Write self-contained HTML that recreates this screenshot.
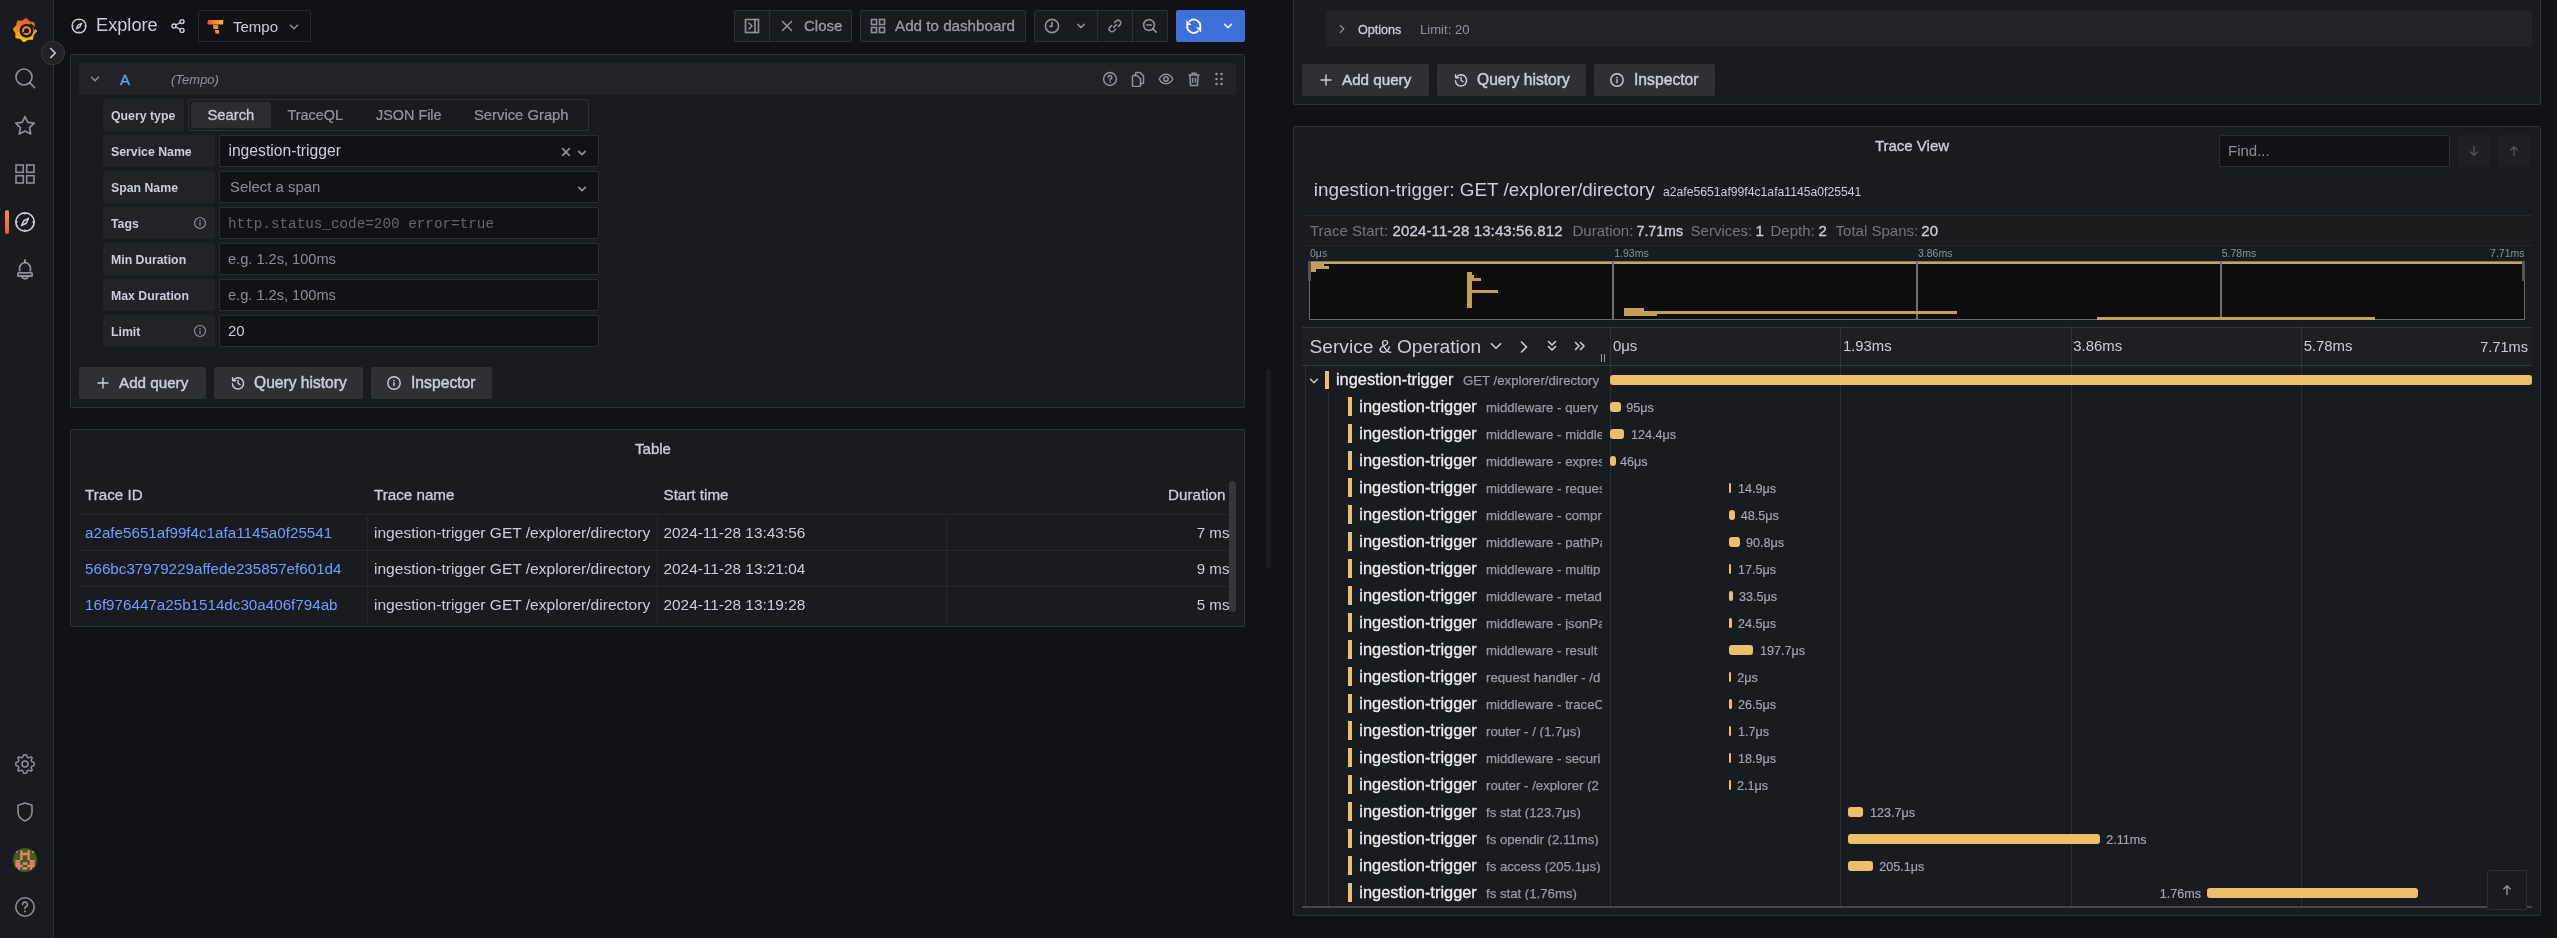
<!DOCTYPE html><html><head><meta charset="utf-8"><title>Explore - Tempo</title><style>html,body{margin:0;padding:0;}body{-webkit-font-smoothing:antialiased;width:2557px;height:938px;overflow:hidden;position:relative;background:#111217;font-family:"Liberation Sans",sans-serif;}</style></head><body><div style="position:absolute;left:0;top:0;width:2557px;height:938px;will-change:transform;">
<div style="position:absolute;left:0px;top:0px;width:53px;height:938px;background:#181b1f;border-right:1px solid rgba(204,204,220,0.12);"></div>
<svg style="position:absolute;left:13px;top:18px;" width="24" height="24" viewBox="0 0 24 24" fill="none"><defs><linearGradient id="glg" x1="0" y1="0" x2="0" y2="1"><stop offset="0" stop-color="#f05a28"/><stop offset="1" stop-color="#fbca0a"/></linearGradient></defs>
<path fill="url(#glg)" stroke="url(#glg)" stroke-width="2.2" stroke-linejoin="round" d="M13.10 1.25 L16.21 4.36 L20.52 5.24 L20.52 9.63 L22.95 13.30 L19.84 16.41 L18.96 20.72 L14.57 20.72 L10.90 23.15 L7.79 20.04 L3.48 19.16 L3.48 14.77 L1.05 11.10 L4.16 7.99 L5.04 3.68 L9.43 3.68 Z"/>
<circle cx="13.5" cy="12.7" r="7.0" fill="#181b1f"/>
<path d="M16.8 6.0 Q20.6 7.6 22.2 11.6" stroke="#181b1f" stroke-width="1.6" fill="none"/>
<circle cx="13.5" cy="12.7" r="3.5" stroke="#f98a2a" stroke-width="1.9" fill="none"/>
<path d="M10.2 15.0 L12.4 13.4" stroke="#181b1f" stroke-width="1.4"/></svg>
<div style="position:absolute;left:41px;top:41px;width:24px;height:24px;background:#212328;border:1px solid rgba(204,204,220,0.12);border-radius:50%;box-sizing:border-box;"></div>
<svg style="position:absolute;left:45px;top:45px;" width="16" height="16" viewBox="0 0 16 16" fill="none"><path d="M5.75 3.5 L10.25 8 L5.75 12.5" stroke="#ccccdc" stroke-width="1.6" stroke-linecap="round" stroke-linejoin="round"/></svg>
<svg style="position:absolute;left:13px;top:66px;" width="24" height="24" viewBox="0 0 24 24" fill="none"><circle cx="11" cy="11" r="8" stroke="rgba(204,204,220,0.65)" stroke-width="1.7"/><path d="M16.9 16.9 L21.6 21.6" stroke="rgba(204,204,220,0.65)" stroke-width="1.6" stroke-linecap="round"/></svg>
<svg style="position:absolute;left:13px;top:114px;" width="24" height="24" viewBox="0 0 24 24" fill="none"><g transform="translate(12 11.8) scale(1.08) translate(-12 -11.8)"><path d="M12 3.2 L14.6 8.6 L20.5 9.4 L16.2 13.5 L17.3 19.4 L12 16.6 L6.7 19.4 L7.8 13.5 L3.5 9.4 L9.4 8.6 Z" stroke="rgba(204,204,220,0.65)" stroke-width="1.6" stroke-linejoin="round"/></g></svg>
<svg style="position:absolute;left:13px;top:162px;" width="24" height="24" viewBox="0 0 24 24" fill="none"><rect x="3" y="3" width="7.3" height="7.3" stroke="rgba(204,204,220,0.65)" stroke-width="1.6"/><rect x="13.7" y="3" width="7.3" height="7.3" stroke="rgba(204,204,220,0.65)" stroke-width="1.6"/><rect x="3" y="13.7" width="7.3" height="7.3" stroke="rgba(204,204,220,0.65)" stroke-width="1.6"/><rect x="13.7" y="13.7" width="7.3" height="7.3" stroke="rgba(204,204,220,0.65)" stroke-width="1.6"/></svg>
<div style="position:absolute;left:5px;top:210px;width:4px;height:24px;background:linear-gradient(180deg,#ff8833,#f55f3e);border-radius:2px;"></div>
<svg style="position:absolute;left:13px;top:210px;" width="24" height="24" viewBox="0 0 24 24" fill="none"><g transform="scale(1.0)"><circle cx="12" cy="12" r="9.2" stroke="#ccccdc" stroke-width="1.7"/><path d="M15.5 8.5 L13.2 13.2 L8.5 15.5 L10.8 10.8 Z" stroke="#ccccdc" stroke-width="1.53" stroke-linejoin="round"/><path d="M12 2.8 V4.6 M12 19.4 V21.2 M2.8 12 H4.6 M19.4 12 H21.2" stroke="#ccccdc" stroke-width="1.53"/></g></svg>
<svg style="position:absolute;left:13px;top:258px;" width="24" height="24" viewBox="0 0 24 24" fill="none"><path d="M12 2 V4.2" stroke="rgba(204,204,220,0.65)" stroke-width="1.9" stroke-linecap="round"/><path d="M6.6 13.6 V10.1 A5.4 5.4 0 0 1 17.4 10.1 V13.6" stroke="rgba(204,204,220,0.65)" stroke-width="1.8"/><rect x="4.9" y="14.9" width="14.2" height="3.1" rx="0.6" stroke="rgba(204,204,220,0.65)" stroke-width="1.8"/><path d="M9 18.8 A3.1 2.6 0 0 0 15 18.8" stroke="rgba(204,204,220,0.65)" stroke-width="1.8"/></svg>
<svg style="position:absolute;left:13px;top:752px;" width="24" height="24" viewBox="0 0 24 24" fill="none"><circle cx="12" cy="12" r="3" stroke="rgba(204,204,220,0.65)" stroke-width="1.6"/><path d="M12 2.8 L13.6 3 L14.2 5.2 L15.9 5.9 L17.9 4.8 L19.2 6.1 L18.1 8.1 L18.8 9.8 L21 10.4 L21.2 12 L21 13.6 L18.8 14.2 L18.1 15.9 L19.2 17.9 L17.9 19.2 L15.9 18.1 L14.2 18.8 L13.6 21 L12 21.2 L10.4 21 L9.8 18.8 L8.1 18.1 L6.1 19.2 L4.8 17.9 L5.9 15.9 L5.2 14.2 L3 13.6 L2.8 12 L3 10.4 L5.2 9.8 L5.9 8.1 L4.8 6.1 L6.1 4.8 L8.1 5.9 L9.8 5.2 L10.4 3 Z" stroke="rgba(204,204,220,0.65)" stroke-width="1.5" stroke-linejoin="round"/></svg>
<svg style="position:absolute;left:13px;top:800px;" width="24" height="24" viewBox="0 0 24 24" fill="none"><path d="M12 3 L19 5.2 V12 C19 16.5 15.5 19.5 12 21 C8.5 19.5 5 16.5 5 12 V5.2 Z" stroke="rgba(204,204,220,0.65)" stroke-width="1.6" stroke-linejoin="round"/></svg>
<svg style="position:absolute;left:13px;top:848px;" width="24" height="24" viewBox="0 0 24 24" fill="none"><defs><clipPath id="avc"><circle cx="12" cy="12" r="12"/></clipPath></defs><g clip-path="url(#avc)"><rect width="24" height="24" fill="#3f5f17"/><rect x="2.40" y="2.40" width="2.45" height="2.45" fill="#f27f7a"/><rect x="7.20" y="2.40" width="2.45" height="2.45" fill="#f27f7a"/><rect x="14.40" y="2.40" width="2.45" height="2.45" fill="#f27f7a"/><rect x="19.20" y="2.40" width="2.45" height="2.45" fill="#f27f7a"/><rect x="7.20" y="4.80" width="2.45" height="2.45" fill="#f27f7a"/><rect x="9.60" y="4.80" width="2.45" height="2.45" fill="#f27f7a"/><rect x="12.00" y="4.80" width="2.45" height="2.45" fill="#f27f7a"/><rect x="14.40" y="4.80" width="2.45" height="2.45" fill="#f27f7a"/><rect x="7.20" y="7.20" width="2.45" height="2.45" fill="#f27f7a"/><rect x="14.40" y="7.20" width="2.45" height="2.45" fill="#f27f7a"/><rect x="7.20" y="9.60" width="2.45" height="2.45" fill="#f27f7a"/><rect x="14.40" y="9.60" width="2.45" height="2.45" fill="#f27f7a"/><rect x="2.40" y="12.00" width="2.45" height="2.45" fill="#f27f7a"/><rect x="4.80" y="12.00" width="2.45" height="2.45" fill="#f27f7a"/><rect x="16.80" y="12.00" width="2.45" height="2.45" fill="#f27f7a"/><rect x="19.20" y="12.00" width="2.45" height="2.45" fill="#f27f7a"/><rect x="2.40" y="14.40" width="2.45" height="2.45" fill="#f27f7a"/><rect x="4.80" y="14.40" width="2.45" height="2.45" fill="#f27f7a"/><rect x="9.60" y="14.40" width="2.45" height="2.45" fill="#f27f7a"/><rect x="12.00" y="14.40" width="2.45" height="2.45" fill="#f27f7a"/><rect x="16.80" y="14.40" width="2.45" height="2.45" fill="#f27f7a"/><rect x="19.20" y="14.40" width="2.45" height="2.45" fill="#f27f7a"/><rect x="2.40" y="16.80" width="2.45" height="2.45" fill="#f27f7a"/><rect x="4.80" y="16.80" width="2.45" height="2.45" fill="#f27f7a"/><rect x="7.20" y="16.80" width="2.45" height="2.45" fill="#f27f7a"/><rect x="14.40" y="16.80" width="2.45" height="2.45" fill="#f27f7a"/><rect x="16.80" y="16.80" width="2.45" height="2.45" fill="#f27f7a"/><rect x="19.20" y="16.80" width="2.45" height="2.45" fill="#f27f7a"/><rect x="4.80" y="19.20" width="2.45" height="2.45" fill="#f27f7a"/><rect x="9.60" y="19.20" width="2.45" height="2.45" fill="#f27f7a"/><rect x="12.00" y="19.20" width="2.45" height="2.45" fill="#f27f7a"/><rect x="16.80" y="19.20" width="2.45" height="2.45" fill="#f27f7a"/></g></svg>
<svg style="position:absolute;left:13px;top:895px;" width="24" height="24" viewBox="0 0 24 24" fill="none"><circle cx="12" cy="12" r="9.2" stroke="rgba(204,204,220,0.65)" stroke-width="1.6"/><path d="M9.6 9.6 A2.4 2.4 0 1 1 12.8 11.8 C12.2 12.1 12 12.5 12 13.2 V13.6" stroke="rgba(204,204,220,0.65)" stroke-width="1.6" stroke-linecap="round"/><circle cx="12" cy="16.5" r="1" fill="rgba(204,204,220,0.65)"/></svg>
<svg style="position:absolute;left:70px;top:17px;" width="18" height="18" viewBox="0 0 18 18" fill="none"><g transform="scale(0.75)"><circle cx="12" cy="12" r="9.2" stroke="#ccccdc" stroke-width="1.9"/><path d="M15.5 8.5 L13.2 13.2 L8.5 15.5 L10.8 10.8 Z" stroke="#ccccdc" stroke-width="1.71" stroke-linejoin="round"/><path d="M12 2.8 V4.6 M12 19.4 V21.2 M2.8 12 H4.6 M19.4 12 H21.2" stroke="#ccccdc" stroke-width="1.71"/></g></svg>
<div style="position:absolute;top:15.99px;font-size:18.2px;line-height:18.2px;font-weight:400;color:#ccccdc;white-space:nowrap;left:96px;">Explore</div>
<svg style="position:absolute;left:170px;top:18px;" width="16" height="16" viewBox="0 0 16 16" fill="none"><circle cx="12" cy="3.6" r="2" stroke="#ccccdc" stroke-width="1.4"/><circle cx="12" cy="12.4" r="2" stroke="#ccccdc" stroke-width="1.4"/><circle cx="4" cy="8" r="2" stroke="#ccccdc" stroke-width="1.4"/><path d="M5.8 7 L10.2 4.6 M5.8 9 L10.2 11.4" stroke="#ccccdc" stroke-width="1.4"/></svg>
<div style="position:absolute;left:198px;top:10px;width:113px;height:32px;border:1px solid rgba(204,204,220,0.12);border-radius:2px;box-sizing:border-box;background:#111217;"></div>
<svg style="position:absolute;left:207px;top:19px;" width="17" height="16" viewBox="0 0 17 16" fill="none"><defs><linearGradient id="tg" x1="0" y1="0" x2="1" y2="0"><stop offset="0" stop-color="#f4502a"/><stop offset="1" stop-color="#fbbd26"/></linearGradient></defs><path d="M1.2 1.1 H16.1 V5.5 H1 L0.2 5 Z" fill="url(#tg)"/><path d="M6.1 5.8 H11.2 V9.9 H7 L6.1 9 Z" fill="#f7892b"/><path d="M7.9 10.9 H12.1 V14.8 H8.6 Z" fill="#f6822b"/></svg>
<div style="position:absolute;top:18.70px;font-size:15px;line-height:15px;font-weight:400;color:#ccccdc;white-space:nowrap;left:233px;">Tempo</div>
<svg style="position:absolute;left:286px;top:18.5px;" width="16" height="16" viewBox="0 0 16 16" fill="none"><path d="M4.5 6.25 L8 9.75 L11.5 6.25" stroke="rgba(204,204,220,0.65)" stroke-width="1.5" stroke-linecap="round" stroke-linejoin="round"/></svg>
<div style="position:absolute;left:734px;top:10px;width:118px;height:32px;border:1px solid rgba(204,204,220,0.12);border-radius:2px;box-sizing:border-box;background:#181b1f;"></div>
<div style="position:absolute;left:769px;top:10px;width:1px;height:32px;background:rgba(204,204,220,0.12);"></div>
<svg style="position:absolute;left:744px;top:18px;" width="16" height="16" viewBox="0 0 16 16" fill="none"><rect x="1.5" y="1.5" width="13" height="13" stroke="rgba(204,204,220,0.65)" stroke-width="1.65"/><path d="M11 1.5 V14.5" stroke="rgba(204,204,220,0.65)" stroke-width="1.65"/><path d="M5 5 L8 8 L5 11" stroke="rgba(204,204,220,0.65)" stroke-width="1.65" stroke-linecap="round" stroke-linejoin="round"/></svg>
<svg style="position:absolute;left:779px;top:18px;" width="16" height="16" viewBox="0 0 16 16" fill="none"><path d="M3.5 3.5 L12.5 12.5 M12.5 3.5 L3.5 12.5" stroke="rgba(204,204,220,0.65)" stroke-width="1.65" stroke-linecap="round"/></svg>
<div style="position:absolute;top:18.30px;font-size:15px;line-height:15px;font-weight:400;color:rgba(204,204,220,0.65);white-space:nowrap;-webkit-text-stroke:0.3px rgba(204,204,220,0.65);left:804px;">Close</div>
<div style="position:absolute;left:860px;top:10px;width:166px;height:32px;border:1px solid rgba(204,204,220,0.12);border-radius:2px;box-sizing:border-box;background:#181b1f;"></div>
<svg style="position:absolute;left:870px;top:18px;" width="16" height="16" viewBox="0 0 16 16" fill="none"><rect x="1.5" y="1.5" width="5" height="5" stroke="rgba(204,204,220,0.65)" stroke-width="1.65"/><rect x="9.5" y="1.5" width="5" height="5" stroke="rgba(204,204,220,0.65)" stroke-width="1.65"/><rect x="1.5" y="9.5" width="5" height="5" stroke="rgba(204,204,220,0.65)" stroke-width="1.65"/><rect x="9.5" y="9.5" width="5" height="5" stroke="rgba(204,204,220,0.65)" stroke-width="1.65"/></svg>
<div style="position:absolute;top:18.13px;font-size:15.2px;line-height:15.2px;font-weight:400;color:rgba(204,204,220,0.65);white-space:nowrap;-webkit-text-stroke:0.3px rgba(204,204,220,0.65);left:895px;">Add to dashboard</div>
<div style="position:absolute;left:1034px;top:10px;width:134px;height:32px;border:1px solid rgba(204,204,220,0.12);border-radius:2px;box-sizing:border-box;background:#181b1f;"></div>
<div style="position:absolute;left:1097px;top:10px;width:1px;height:32px;background:rgba(204,204,220,0.12);"></div>
<div style="position:absolute;left:1132px;top:10px;width:1px;height:32px;background:rgba(204,204,220,0.12);"></div>
<svg style="position:absolute;left:1044px;top:18px;" width="16" height="16" viewBox="0 0 16 16" fill="none"><circle cx="8" cy="8" r="6.6" stroke="rgba(204,204,220,0.65)" stroke-width="1.65"/><path d="M8 4.3 V8.4 H5.9" stroke="rgba(204,204,220,0.65)" stroke-width="1.65" stroke-linecap="round" stroke-linejoin="round"/></svg>
<svg style="position:absolute;left:1072.5px;top:18px;" width="16" height="16" viewBox="0 0 16 16" fill="none"><path d="M4.8 6.4 L8 9.6 L11.2 6.4" stroke="rgba(204,204,220,0.65)" stroke-width="1.5" stroke-linecap="round" stroke-linejoin="round"/></svg>
<svg style="position:absolute;left:1107px;top:18px;" width="16" height="16" viewBox="0 0 16 16" fill="none"><path d="M6.8 9.2 L9.2 6.8" stroke="rgba(204,204,220,0.65)" stroke-width="1.65" stroke-linecap="round"/><path d="M7.6 4.6 L9.2 3 A2.6 2.6 0 0 1 13 6.8 L11.4 8.4" stroke="rgba(204,204,220,0.65)" stroke-width="1.65" stroke-linecap="round"/><path d="M8.4 11.4 L6.8 13 A2.6 2.6 0 0 1 3 9.2 L4.6 7.6" stroke="rgba(204,204,220,0.65)" stroke-width="1.65" stroke-linecap="round"/></svg>
<svg style="position:absolute;left:1142px;top:18px;" width="16" height="16" viewBox="0 0 16 16" fill="none"><circle cx="7" cy="7" r="5.4" stroke="rgba(204,204,220,0.65)" stroke-width="1.65"/><path d="M4.6 7 H9.4 M11 11 L14.2 14.2" stroke="rgba(204,204,220,0.65)" stroke-width="1.65" stroke-linecap="round"/></svg>
<div style="position:absolute;left:1176px;top:10px;width:69px;height:32px;background:#3d71d9;border-radius:2px;"></div>
<svg style="position:absolute;left:1185px;top:18px;" width="17" height="17" viewBox="0 0 17 17" fill="none"><path d="M4.08 3.58 A6.6 6.6 0 0 1 15.12 9.96" stroke="#fff" stroke-width="1.7"/><path d="M13.42 12.92 A6.6 6.6 0 0 1 2.38 6.54" stroke="#fff" stroke-width="1.7"/><path d="M1.4 1.9 L1.4 6.9 L6.4 6.9 Z" fill="#fff"/><path d="M16.1 14.6 L16.1 9.6 L11.1 9.6 Z" fill="#fff"/></svg>
<svg style="position:absolute;left:1220px;top:18px;" width="16" height="16" viewBox="0 0 16 16" fill="none"><path d="M4.6 6.3 L8 9.7 L11.4 6.3" stroke="#fff" stroke-width="1.6" stroke-linecap="round" stroke-linejoin="round"/></svg>
<div style="position:absolute;left:70px;top:54px;width:1175px;height:354px;background:#181b1f;border:1px solid rgba(204,204,220,0.12);border-radius:2px;box-sizing:border-box;"></div>
<div style="position:absolute;left:79px;top:63px;width:1157px;height:32px;background:#212328;border-radius:2px;"></div>
<svg style="position:absolute;left:87px;top:71px;" width="16" height="16" viewBox="0 0 16 16" fill="none"><path d="M4.4 6.2 L8 9.8 L11.6 6.2" stroke="rgba(204,204,220,0.65)" stroke-width="1.4" stroke-linecap="round" stroke-linejoin="round"/></svg>
<div style="position:absolute;top:71.50px;font-size:15px;line-height:15px;font-weight:400;color:#6e9fff;white-space:nowrap;-webkit-text-stroke:0.3px #6e9fff;left:120px;">A</div>
<div style="position:absolute;top:73.00px;font-size:13px;line-height:13px;font-weight:400;color:rgba(204,204,220,0.65);white-space:nowrap;font-style:italic;left:171px;">(Tempo)</div>
<svg style="position:absolute;left:1102px;top:71px;" width="16" height="16" viewBox="0 0 16 16" fill="none"><circle cx="8" cy="8" r="6.4" stroke="rgba(204,204,220,0.65)" stroke-width="1.5"/><path d="M6.2 6.4 A1.8 1.8 0 1 1 8.6 8 C8.2 8.3 8 8.6 8 9.2" stroke="rgba(204,204,220,0.65)" stroke-width="1.5" stroke-linecap="round"/><circle cx="8" cy="11.2" r="0.8" fill="rgba(204,204,220,0.65)"/></svg>
<svg style="position:absolute;left:1130px;top:71px;" width="16" height="16" viewBox="0 0 16 16" fill="none"><path d="M5.5 4.5 V2.5 A1 1 0 0 1 6.5 1.5 H10 L13.5 5 V11.5 A1 1 0 0 1 12.5 12.5 H10.5" stroke="rgba(204,204,220,0.65)" stroke-width="1.5" stroke-linejoin="round"/><path d="M2.5 5.5 A1 1 0 0 1 3.5 4.5 H7 L10.5 8 V14.5 A1 1 0 0 1 9.5 15.5 H3.5 A1 1 0 0 1 2.5 14.5 Z" stroke="rgba(204,204,220,0.65)" stroke-width="1.5" stroke-linejoin="round"/></svg>
<svg style="position:absolute;left:1158px;top:71px;" width="16" height="16" viewBox="0 0 16 16" fill="none"><path d="M1.2 8 C3 4.6 5.4 3.2 8 3.2 C10.6 3.2 13 4.6 14.8 8 C13 11.4 10.6 12.8 8 12.8 C5.4 12.8 3 11.4 1.2 8 Z" stroke="rgba(204,204,220,0.65)" stroke-width="1.5" stroke-linejoin="round"/><circle cx="8" cy="8" r="2.2" stroke="rgba(204,204,220,0.65)" stroke-width="1.5"/></svg>
<svg style="position:absolute;left:1186px;top:71px;" width="16" height="16" viewBox="0 0 16 16" fill="none"><path d="M2.5 4 H13.5 M6 4 V2.2 H10 V4 M3.8 4 L4.5 14.5 H11.5 L12.2 4 M6.6 6.8 V11.8 M9.4 6.8 V11.8" stroke="rgba(204,204,220,0.65)" stroke-width="1.5" stroke-linejoin="round"/></svg>
<svg style="position:absolute;left:1211px;top:71px;" width="16" height="16" viewBox="0 0 16 16" fill="none"><circle cx="5.5" cy="3" r="1.3" fill="rgba(204,204,220,0.65)"/><circle cx="5.5" cy="8" r="1.3" fill="rgba(204,204,220,0.65)"/><circle cx="5.5" cy="13" r="1.3" fill="rgba(204,204,220,0.65)"/><circle cx="10.5" cy="3" r="1.3" fill="rgba(204,204,220,0.65)"/><circle cx="10.5" cy="8" r="1.3" fill="rgba(204,204,220,0.65)"/><circle cx="10.5" cy="13" r="1.3" fill="rgba(204,204,220,0.65)"/></svg>
<div style="position:absolute;left:103px;top:99px;width:81px;height:32px;background:#212328;border-radius:2px;"></div>
<div style="position:absolute;top:109.59px;font-size:12.3px;line-height:12.3px;font-weight:700;color:#ccccdc;white-space:nowrap;left:111px;">Query type</div>
<div style="position:absolute;left:103px;top:135px;width:112px;height:32px;background:#212328;border-radius:2px;"></div>
<div style="position:absolute;top:145.59px;font-size:12.3px;line-height:12.3px;font-weight:700;color:#ccccdc;white-space:nowrap;left:111px;">Service Name</div>
<div style="position:absolute;left:219px;top:135px;width:380px;height:32px;background:#111217;border:1px solid rgba(204,204,220,0.15);border-radius:2px;box-sizing:border-box;"></div>
<div style="position:absolute;left:103px;top:171px;width:112px;height:32px;background:#212328;border-radius:2px;"></div>
<div style="position:absolute;top:181.59px;font-size:12.3px;line-height:12.3px;font-weight:700;color:#ccccdc;white-space:nowrap;left:111px;">Span Name</div>
<div style="position:absolute;left:219px;top:171px;width:380px;height:32px;background:#111217;border:1px solid rgba(204,204,220,0.15);border-radius:2px;box-sizing:border-box;"></div>
<div style="position:absolute;left:103px;top:207px;width:112px;height:32px;background:#212328;border-radius:2px;"></div>
<div style="position:absolute;top:217.59px;font-size:12.3px;line-height:12.3px;font-weight:700;color:#ccccdc;white-space:nowrap;left:111px;">Tags</div>
<svg style="position:absolute;left:191.5px;top:215px;" width="16" height="16" viewBox="0 0 16 16" fill="none"><circle cx="8" cy="8" r="5.5" stroke="rgba(204,204,220,0.65)" stroke-width="1.2"/><path d="M8 7.6 V10.6" stroke="rgba(204,204,220,0.65)" stroke-width="1.14" stroke-linecap="round"/><circle cx="8" cy="5.6" r="0.8" fill="rgba(204,204,220,0.65)"/></svg>
<div style="position:absolute;left:219px;top:207px;width:380px;height:32px;background:#111217;border:1px solid rgba(204,204,220,0.15);border-radius:2px;box-sizing:border-box;"></div>
<div style="position:absolute;left:103px;top:243px;width:112px;height:32px;background:#212328;border-radius:2px;"></div>
<div style="position:absolute;top:253.59px;font-size:12.3px;line-height:12.3px;font-weight:700;color:#ccccdc;white-space:nowrap;left:111px;">Min Duration</div>
<div style="position:absolute;left:219px;top:243px;width:380px;height:32px;background:#111217;border:1px solid rgba(204,204,220,0.15);border-radius:2px;box-sizing:border-box;"></div>
<div style="position:absolute;left:103px;top:279px;width:112px;height:32px;background:#212328;border-radius:2px;"></div>
<div style="position:absolute;top:289.59px;font-size:12.3px;line-height:12.3px;font-weight:700;color:#ccccdc;white-space:nowrap;left:111px;">Max Duration</div>
<div style="position:absolute;left:219px;top:279px;width:380px;height:32px;background:#111217;border:1px solid rgba(204,204,220,0.15);border-radius:2px;box-sizing:border-box;"></div>
<div style="position:absolute;left:103px;top:315px;width:112px;height:32px;background:#212328;border-radius:2px;"></div>
<div style="position:absolute;top:325.59px;font-size:12.3px;line-height:12.3px;font-weight:700;color:#ccccdc;white-space:nowrap;left:111px;">Limit</div>
<svg style="position:absolute;left:191.5px;top:323px;" width="16" height="16" viewBox="0 0 16 16" fill="none"><circle cx="8" cy="8" r="5.5" stroke="rgba(204,204,220,0.65)" stroke-width="1.2"/><path d="M8 7.6 V10.6" stroke="rgba(204,204,220,0.65)" stroke-width="1.14" stroke-linecap="round"/><circle cx="8" cy="5.6" r="0.8" fill="rgba(204,204,220,0.65)"/></svg>
<div style="position:absolute;left:219px;top:315px;width:380px;height:32px;background:#111217;border:1px solid rgba(204,204,220,0.15);border-radius:2px;box-sizing:border-box;"></div>
<div style="position:absolute;left:188px;top:99px;width:401px;height:32px;border:1px solid rgba(204,204,220,0.12);border-radius:2px;box-sizing:border-box;"></div>
<div style="position:absolute;left:191px;top:102px;width:80px;height:26px;background:rgba(204,204,220,0.10);border-radius:2px;"></div>
<div style="position:absolute;top:107.67px;font-size:14.8px;line-height:14.8px;font-weight:400;color:#ccccdc;white-space:nowrap;-webkit-text-stroke:0.3px #ccccdc;left:207.4px;">Search</div>
<div style="position:absolute;top:108.01px;font-size:14.4px;line-height:14.4px;font-weight:400;color:rgba(204,204,220,0.65);white-space:nowrap;-webkit-text-stroke:0.2px rgba(204,204,220,0.65);left:287.5px;">TraceQL</div>
<div style="position:absolute;top:108.01px;font-size:14.4px;line-height:14.4px;font-weight:400;color:rgba(204,204,220,0.65);white-space:nowrap;-webkit-text-stroke:0.2px rgba(204,204,220,0.65);left:376px;">JSON File</div>
<div style="position:absolute;top:107.67px;font-size:14.8px;line-height:14.8px;font-weight:400;color:rgba(204,204,220,0.65);white-space:nowrap;-webkit-text-stroke:0.2px rgba(204,204,220,0.65);left:474px;">Service Graph</div>
<div style="position:absolute;top:142.81px;font-size:15.7px;line-height:15.7px;font-weight:400;color:#ccccdc;white-space:nowrap;left:228.4px;">ingestion-trigger</div>
<svg style="position:absolute;left:558px;top:144px;" width="16" height="16" viewBox="0 0 16 16" fill="none"><path d="M4.6 4.6 L11.4 11.4 M11.4 4.6 L4.6 11.4" stroke="rgba(204,204,220,0.65)" stroke-width="1.7" stroke-linecap="round"/></svg>
<svg style="position:absolute;left:574px;top:144.5px;" width="16" height="16" viewBox="0 0 16 16" fill="none"><path d="M4.7 6.35 L8 9.65 L11.3 6.35" stroke="rgba(204,204,220,0.65)" stroke-width="1.8" stroke-linecap="round" stroke-linejoin="round"/></svg>
<div style="position:absolute;top:180.39px;font-size:14.9px;line-height:14.9px;font-weight:400;color:rgba(204,204,220,0.65);white-space:nowrap;left:230px;">Select a span</div>
<svg style="position:absolute;left:574px;top:180.5px;" width="16" height="16" viewBox="0 0 16 16" fill="none"><path d="M4.7 6.35 L8 9.65 L11.3 6.35" stroke="rgba(204,204,220,0.65)" stroke-width="1.8" stroke-linecap="round" stroke-linejoin="round"/></svg>
<div style="position:absolute;top:217.40px;font-size:14.3px;line-height:14.3px;font-weight:400;color:rgba(204,204,220,0.45);white-space:nowrap;font-family:'Liberation Mono',monospace;left:228px;">http.status_code=200 error=true</div>
<div style="position:absolute;top:251.94px;font-size:14.6px;line-height:14.6px;font-weight:400;color:rgba(204,204,220,0.65);white-space:nowrap;left:228px;">e.g. 1.2s, 100ms</div>
<div style="position:absolute;top:287.94px;font-size:14.6px;line-height:14.6px;font-weight:400;color:rgba(204,204,220,0.65);white-space:nowrap;left:228px;">e.g. 1.2s, 100ms</div>
<div style="position:absolute;top:322.80px;font-size:15px;line-height:15px;font-weight:400;color:#ccccdc;white-space:nowrap;left:228px;">20</div>
<div style="position:absolute;left:79px;top:367px;width:127px;height:32px;background:rgba(204,204,220,0.12);border-radius:2px;"></div>
<svg style="position:absolute;left:94.5px;top:375.0px;" width="16" height="16" viewBox="0 0 16 16" fill="none"><path d="M8 3 V13 M3 8 H13" stroke="#ccccdc" stroke-width="1.4" stroke-linecap="round"/></svg>
<div style="position:absolute;top:375.13px;font-size:15.2px;line-height:15.2px;font-weight:400;color:#ccccdc;white-space:nowrap;-webkit-text-stroke:0.45px #ccccdc;left:119px;">Add query</div>
<div style="position:absolute;left:214px;top:367px;width:149px;height:32px;background:rgba(204,204,220,0.12);border-radius:2px;"></div>
<svg style="position:absolute;left:230px;top:375.0px;" width="16" height="16" viewBox="0 0 16 16" fill="none"><path d="M3.2 5.5 A5.6 5.6 0 1 1 2.4 8.6" stroke="#ccccdc" stroke-width="1.4" stroke-linecap="round"/><path d="M2.6 2.8 V5.8 H5.6" stroke="#ccccdc" stroke-width="1.4" stroke-linecap="round" stroke-linejoin="round"/><path d="M8 5.3 V8.2 L10 9.6" stroke="#ccccdc" stroke-width="1.4" stroke-linecap="round" stroke-linejoin="round"/></svg>
<div style="position:absolute;top:374.79px;font-size:15.6px;line-height:15.6px;font-weight:400;color:#ccccdc;white-space:nowrap;-webkit-text-stroke:0.45px #ccccdc;left:254px;">Query history</div>
<div style="position:absolute;left:371px;top:367px;width:121px;height:32px;background:rgba(204,204,220,0.12);border-radius:2px;"></div>
<svg style="position:absolute;left:386px;top:375.0px;" width="16" height="16" viewBox="0 0 16 16" fill="none"><circle cx="8" cy="8" r="6.2" stroke="#ccccdc" stroke-width="1.4"/><path d="M8 7.6 V10.6" stroke="#ccccdc" stroke-width="1.33" stroke-linecap="round"/><circle cx="8" cy="5.6" r="0.8" fill="#ccccdc"/></svg>
<div style="position:absolute;top:374.71px;font-size:15.7px;line-height:15.7px;font-weight:400;color:#ccccdc;white-space:nowrap;-webkit-text-stroke:0.45px #ccccdc;left:411px;">Inspector</div>
<div style="position:absolute;left:1266px;top:369px;width:5px;height:199px;background:rgba(204,204,220,0.06);border-radius:3px;"></div>
<div style="position:absolute;left:70px;top:429px;width:1175px;height:198px;background:#181b1f;border:1px solid rgba(204,204,220,0.12);border-radius:2px;box-sizing:border-box;"></div>
<div style="position:absolute;top:441.30px;font-size:15px;line-height:15px;font-weight:400;color:#ccccdc;white-space:nowrap;-webkit-text-stroke:0.35px #ccccdc;left:453px;width:400px;text-align:center;">Table</div>
<div style="position:absolute;top:487.13px;font-size:15.2px;line-height:15.2px;font-weight:400;color:#ccccdc;white-space:nowrap;-webkit-text-stroke:0.3px #ccccdc;left:85px;">Trace ID</div>
<div style="position:absolute;top:487.13px;font-size:15.2px;line-height:15.2px;font-weight:400;color:#ccccdc;white-space:nowrap;-webkit-text-stroke:0.3px #ccccdc;left:374px;">Trace name</div>
<div style="position:absolute;top:487.13px;font-size:15.2px;line-height:15.2px;font-weight:400;color:#ccccdc;white-space:nowrap;-webkit-text-stroke:0.3px #ccccdc;left:663.5px;">Start time</div>
<div style="position:absolute;top:487.13px;font-size:15.2px;line-height:15.2px;font-weight:400;color:#ccccdc;white-space:nowrap;-webkit-text-stroke:0.3px #ccccdc;right:1331.5px;text-align:right;">Duration</div>
<div style="position:absolute;left:79px;top:514px;width:1150px;height:1px;background:rgba(204,204,220,0.07);"></div>
<div style="position:absolute;left:79px;top:550px;width:1150px;height:1px;background:rgba(204,204,220,0.07);"></div>
<div style="position:absolute;left:79px;top:586px;width:1150px;height:1px;background:rgba(204,204,220,0.07);"></div>
<div style="position:absolute;top:525.13px;font-size:15.2px;line-height:15.2px;font-weight:400;color:#6e9fff;white-space:nowrap;left:85px;">a2afe5651af99f4c1afa1145a0f25541</div>
<div style="position:absolute;top:524.84px;font-size:15.55px;line-height:15.55px;font-weight:400;color:#ccccdc;white-space:nowrap;left:374px;">ingestion-trigger GET /explorer/directory</div>
<div style="position:absolute;top:524.96px;font-size:15.4px;line-height:15.4px;font-weight:400;color:#ccccdc;white-space:nowrap;left:663.5px;">2024-11-28 13:43:56</div>
<div style="position:absolute;top:525.22px;font-size:15.1px;line-height:15.1px;font-weight:400;color:#ccccdc;white-space:nowrap;right:1327.5px;text-align:right;">7 ms</div>
<div style="position:absolute;left:367px;top:516px;width:1px;height:35px;background:rgba(204,204,220,0.07);"></div>
<div style="position:absolute;left:657px;top:516px;width:1px;height:35px;background:rgba(204,204,220,0.07);"></div>
<div style="position:absolute;left:946px;top:516px;width:1px;height:35px;background:rgba(204,204,220,0.07);"></div>
<div style="position:absolute;top:561.13px;font-size:15.2px;line-height:15.2px;font-weight:400;color:#6e9fff;white-space:nowrap;left:85px;">566bc37979229affede235857ef601d4</div>
<div style="position:absolute;top:560.84px;font-size:15.55px;line-height:15.55px;font-weight:400;color:#ccccdc;white-space:nowrap;left:374px;">ingestion-trigger GET /explorer/directory</div>
<div style="position:absolute;top:560.96px;font-size:15.4px;line-height:15.4px;font-weight:400;color:#ccccdc;white-space:nowrap;left:663.5px;">2024-11-28 13:21:04</div>
<div style="position:absolute;top:561.22px;font-size:15.1px;line-height:15.1px;font-weight:400;color:#ccccdc;white-space:nowrap;right:1327.5px;text-align:right;">9 ms</div>
<div style="position:absolute;left:367px;top:552px;width:1px;height:35px;background:rgba(204,204,220,0.07);"></div>
<div style="position:absolute;left:657px;top:552px;width:1px;height:35px;background:rgba(204,204,220,0.07);"></div>
<div style="position:absolute;left:946px;top:552px;width:1px;height:35px;background:rgba(204,204,220,0.07);"></div>
<div style="position:absolute;top:597.13px;font-size:15.2px;line-height:15.2px;font-weight:400;color:#6e9fff;white-space:nowrap;left:85px;">16f976447a25b1514dc30a406f794ab</div>
<div style="position:absolute;top:596.84px;font-size:15.55px;line-height:15.55px;font-weight:400;color:#ccccdc;white-space:nowrap;left:374px;">ingestion-trigger GET /explorer/directory</div>
<div style="position:absolute;top:596.96px;font-size:15.4px;line-height:15.4px;font-weight:400;color:#ccccdc;white-space:nowrap;left:663.5px;">2024-11-28 13:19:28</div>
<div style="position:absolute;top:597.22px;font-size:15.1px;line-height:15.1px;font-weight:400;color:#ccccdc;white-space:nowrap;right:1327.5px;text-align:right;">5 ms</div>
<div style="position:absolute;left:367px;top:588px;width:1px;height:35px;background:rgba(204,204,220,0.07);"></div>
<div style="position:absolute;left:657px;top:588px;width:1px;height:35px;background:rgba(204,204,220,0.07);"></div>
<div style="position:absolute;left:946px;top:588px;width:1px;height:35px;background:rgba(204,204,220,0.07);"></div>
<div style="position:absolute;left:1229px;top:481px;width:7px;height:131px;background:rgba(204,204,220,0.16);border-radius:4px;"></div>
<div style="position:absolute;left:1293px;top:-10px;width:1248px;height:115px;background:#181b1f;border:1px solid rgba(204,204,220,0.12);border-radius:2px;box-sizing:border-box;"></div>
<div style="position:absolute;left:1326px;top:10px;width:1206px;height:37px;background:#212328;border-radius:2px;"></div>
<svg style="position:absolute;left:1334px;top:21px;" width="16" height="16" viewBox="0 0 16 16" fill="none"><path d="M6.2 4.4 L9.8 8 L6.2 11.6" stroke="rgba(204,204,220,0.65)" stroke-width="1.3" stroke-linecap="round" stroke-linejoin="round"/></svg>
<div style="position:absolute;top:23.63px;font-size:12.6px;line-height:12.6px;font-weight:400;color:#ccccdc;white-space:nowrap;-webkit-text-stroke:0.3px #ccccdc;left:1358px;">Options</div>
<div style="position:absolute;top:23.21px;font-size:13.1px;line-height:13.1px;font-weight:400;color:rgba(204,204,220,0.65);white-space:nowrap;left:1420px;">Limit: 20</div>
<div style="position:absolute;left:1302px;top:64px;width:127px;height:32px;background:rgba(204,204,220,0.12);border-radius:2px;"></div>
<svg style="position:absolute;left:1317.5px;top:72.0px;" width="16" height="16" viewBox="0 0 16 16" fill="none"><path d="M8 3 V13 M3 8 H13" stroke="#ccccdc" stroke-width="1.4" stroke-linecap="round"/></svg>
<div style="position:absolute;top:72.13px;font-size:15.2px;line-height:15.2px;font-weight:400;color:#ccccdc;white-space:nowrap;-webkit-text-stroke:0.45px #ccccdc;left:1342px;">Add query</div>
<div style="position:absolute;left:1437px;top:64px;width:149px;height:32px;background:rgba(204,204,220,0.12);border-radius:2px;"></div>
<svg style="position:absolute;left:1453px;top:72.0px;" width="16" height="16" viewBox="0 0 16 16" fill="none"><path d="M3.2 5.5 A5.6 5.6 0 1 1 2.4 8.6" stroke="#ccccdc" stroke-width="1.4" stroke-linecap="round"/><path d="M2.6 2.8 V5.8 H5.6" stroke="#ccccdc" stroke-width="1.4" stroke-linecap="round" stroke-linejoin="round"/><path d="M8 5.3 V8.2 L10 9.6" stroke="#ccccdc" stroke-width="1.4" stroke-linecap="round" stroke-linejoin="round"/></svg>
<div style="position:absolute;top:71.79px;font-size:15.6px;line-height:15.6px;font-weight:400;color:#ccccdc;white-space:nowrap;-webkit-text-stroke:0.45px #ccccdc;left:1477px;">Query history</div>
<div style="position:absolute;left:1594px;top:64px;width:121px;height:32px;background:rgba(204,204,220,0.12);border-radius:2px;"></div>
<svg style="position:absolute;left:1609px;top:72.0px;" width="16" height="16" viewBox="0 0 16 16" fill="none"><circle cx="8" cy="8" r="6.2" stroke="#ccccdc" stroke-width="1.4"/><path d="M8 7.6 V10.6" stroke="#ccccdc" stroke-width="1.33" stroke-linecap="round"/><circle cx="8" cy="5.6" r="0.8" fill="#ccccdc"/></svg>
<div style="position:absolute;top:71.71px;font-size:15.7px;line-height:15.7px;font-weight:400;color:#ccccdc;white-space:nowrap;-webkit-text-stroke:0.45px #ccccdc;left:1634px;">Inspector</div>
<div style="position:absolute;left:1293px;top:126px;width:1248px;height:790px;background:#181b1f;border:1px solid rgba(204,204,220,0.12);border-radius:2px;box-sizing:border-box;"></div>
<div style="position:absolute;top:138.30px;font-size:15px;line-height:15px;font-weight:400;color:#ccccdc;white-space:nowrap;-webkit-text-stroke:0.35px #ccccdc;left:1712px;width:400px;text-align:center;">Trace View</div>
<div style="position:absolute;left:2219px;top:135px;width:231px;height:32px;background:#111217;border:1px solid rgba(204,204,220,0.15);border-radius:2px;box-sizing:border-box;"></div>
<div style="position:absolute;top:143.30px;font-size:15px;line-height:15px;font-weight:400;color:rgba(204,204,220,0.65);white-space:nowrap;left:2228px;">Find...</div>
<div style="position:absolute;left:2458px;top:135px;width:32px;height:32px;background:rgba(204,204,220,0.03);border-radius:2px;"></div>
<div style="position:absolute;left:2498px;top:135px;width:32px;height:32px;background:rgba(204,204,220,0.03);border-radius:2px;"></div>
<svg style="position:absolute;left:2466px;top:143px;" width="16" height="16" viewBox="0 0 16 16" fill="none"><path d="M8 3.5 V12 M4.8 9 L8 12.2 L11.2 9" stroke="rgba(204,204,220,0.3)" stroke-width="1.4" stroke-linecap="round" stroke-linejoin="round"/></svg>
<svg style="position:absolute;left:2506px;top:143px;" width="16" height="16" viewBox="0 0 16 16" fill="none"><path d="M8 12.5 V4 M4.8 7 L8 3.8 L11.2 7" stroke="rgba(204,204,220,0.3)" stroke-width="1.4" stroke-linecap="round" stroke-linejoin="round"/></svg>
<div style="position:absolute;top:180.60px;font-size:18.9px;line-height:18.9px;font-weight:400;color:#ccccdc;white-space:nowrap;left:1313.8px;">ingestion-trigger: GET /explorer/directory</div>
<div style="position:absolute;top:185.97px;font-size:12.2px;line-height:12.2px;font-weight:400;color:#ccccdc;white-space:nowrap;left:1663px;">a2afe5651af99f4c1afa1145a0f25541</div>
<div style="position:absolute;left:1302px;top:215px;width:1230px;height:30px;background:#1c1c1e;border-top:1px solid rgba(204,204,220,0.07);box-sizing:border-box;"></div>
<div style="position:absolute;left:1302px;top:245px;width:1230px;height:1px;background:rgba(204,204,220,0.07);"></div>
<div style="position:absolute;top:223.00px;font-size:15px;line-height:15px;font-weight:400;color:rgba(204,204,220,0.5);white-space:nowrap;left:1310px;">Trace Start:</div>
<div style="position:absolute;top:223.00px;font-size:15px;line-height:15px;font-weight:400;color:#ccccdc;white-space:nowrap;-webkit-text-stroke:0.35px #ccccdc;letter-spacing:0.12px;left:1392.6px;">2024-11-28 13:43:56.812</div>
<div style="position:absolute;top:223.00px;font-size:15px;line-height:15px;font-weight:400;color:rgba(204,204,220,0.5);white-space:nowrap;left:1572.5px;">Duration:</div>
<div style="position:absolute;top:223.68px;font-size:14.2px;line-height:14.2px;font-weight:400;color:#ccccdc;white-space:nowrap;-webkit-text-stroke:0.35px #ccccdc;letter-spacing:0px;left:1636.5px;">7.71ms</div>
<div style="position:absolute;top:223.00px;font-size:15px;line-height:15px;font-weight:400;color:rgba(204,204,220,0.5);white-space:nowrap;left:1690.6px;">Services:</div>
<div style="position:absolute;top:223.00px;font-size:15px;line-height:15px;font-weight:400;color:#ccccdc;white-space:nowrap;-webkit-text-stroke:0.35px #ccccdc;letter-spacing:0.12px;left:1755.6px;">1</div>
<div style="position:absolute;top:223.00px;font-size:15px;line-height:15px;font-weight:400;color:rgba(204,204,220,0.5);white-space:nowrap;left:1770.5px;">Depth:</div>
<div style="position:absolute;top:223.00px;font-size:15px;line-height:15px;font-weight:400;color:#ccccdc;white-space:nowrap;-webkit-text-stroke:0.35px #ccccdc;letter-spacing:0.12px;left:1818.5px;">2</div>
<div style="position:absolute;top:223.00px;font-size:15px;line-height:15px;font-weight:400;color:rgba(204,204,220,0.5);white-space:nowrap;left:1835.6px;">Total Spans:</div>
<div style="position:absolute;top:223.00px;font-size:15px;line-height:15px;font-weight:400;color:#ccccdc;white-space:nowrap;-webkit-text-stroke:0.35px #ccccdc;letter-spacing:0.12px;left:1921.3px;">20</div>
<div style="position:absolute;top:248.11px;font-size:10.5px;line-height:10.5px;font-weight:400;color:rgba(204,204,220,0.65);white-space:nowrap;left:1310.0px;">0μs</div>
<div style="position:absolute;top:248.11px;font-size:10.5px;line-height:10.5px;font-weight:400;color:rgba(204,204,220,0.65);white-space:nowrap;left:1614.25px;">1.93ms</div>
<div style="position:absolute;top:248.11px;font-size:10.5px;line-height:10.5px;font-weight:400;color:rgba(204,204,220,0.65);white-space:nowrap;left:1918.0px;">3.86ms</div>
<div style="position:absolute;top:248.11px;font-size:10.5px;line-height:10.5px;font-weight:400;color:rgba(204,204,220,0.65);white-space:nowrap;left:2221.75px;">5.78ms</div>
<div style="position:absolute;top:248.11px;font-size:10.5px;line-height:10.5px;font-weight:400;color:rgba(204,204,220,0.65);white-space:nowrap;right:32.5px;text-align:right;">7.71ms</div>
<div style="position:absolute;left:1309px;top:261px;width:1216px;height:59px;background:#0e0e0e;border:1px solid #6a6a6a;border-top:none;box-sizing:border-box;"></div>
<div style="position:absolute;left:1309px;top:261px;width:1216px;height:1px;background:#777;"></div>
<div style="position:absolute;left:1310px;top:262px;width:1214px;height:2px;background:#c9a45d;"></div>
<div style="position:absolute;left:1612px;top:262px;width:1.5px;height:57px;background:#6f6f6f;"></div>
<div style="position:absolute;left:1916px;top:262px;width:1.5px;height:57px;background:#6f6f6f;"></div>
<div style="position:absolute;left:2220px;top:262px;width:1.5px;height:57px;background:#6f6f6f;"></div>
<div style="position:absolute;left:1308px;top:261px;width:3px;height:20px;background:#555;"></div>
<div style="position:absolute;left:2522px;top:261px;width:3px;height:20px;background:#555;"></div>
<div style="position:absolute;left:1311px;top:263px;width:13px;height:3px;background:#c49f55;"></div>
<div style="position:absolute;left:1311px;top:266px;width:18px;height:3px;background:#c49f55;"></div>
<div style="position:absolute;left:1311px;top:263px;width:5px;height:9px;background:#c49f55;"></div>
<div style="position:absolute;left:1467px;top:272px;width:5px;height:36px;background:#c49f55;"></div>
<div style="position:absolute;left:1471px;top:275px;width:3px;height:6px;background:#c49f55;"></div>
<div style="position:absolute;left:1471px;top:278px;width:10px;height:3px;background:#c49f55;"></div>
<div style="position:absolute;left:1471px;top:290px;width:27px;height:3px;background:#c49f55;"></div>
<div style="position:absolute;left:1624px;top:308px;width:20px;height:4px;background:#c49f55;"></div>
<div style="position:absolute;left:1624px;top:311px;width:33px;height:5px;background:#c49f55;"></div>
<div style="position:absolute;left:1644px;top:311px;width:313px;height:3px;background:#c49f55;"></div>
<div style="position:absolute;left:2097px;top:317px;width:278px;height:3px;background:#c49f55;"></div>
<div style="position:absolute;left:1302px;top:327px;width:1230px;height:39px;background:#1e1f22;border-top:1px solid rgba(204,204,220,0.12);border-bottom:1px solid rgba(204,204,220,0.14);box-sizing:border-box;"></div>
<div style="position:absolute;top:337.25px;font-size:19.2px;line-height:19.2px;font-weight:400;color:#ccccdc;white-space:nowrap;left:1309.5px;">Service &amp; Operation</div>
<svg style="position:absolute;left:1488px;top:338px;" width="16" height="16" viewBox="0 0 16 16" fill="none"><path d="M3.4000000000000004 5.7 L8 10.3 L12.6 5.7" stroke="#ccccdc" stroke-width="1.6" stroke-linecap="round" stroke-linejoin="round"/></svg>
<svg style="position:absolute;left:1515.5px;top:338.5px;" width="16" height="16" viewBox="0 0 16 16" fill="none"><path d="M5.5 3 L10.5 8 L5.5 13" stroke="#ccccdc" stroke-width="1.6" stroke-linecap="round" stroke-linejoin="round"/></svg>
<svg style="position:absolute;left:1543.5px;top:338px;" width="16" height="16" viewBox="0 0 16 16" fill="none"><path d="M4.5 3.5 L8 7 L11.5 3.5 M4.5 8.5 L8 12 L11.5 8.5" stroke="#ccccdc" stroke-width="1.6" stroke-linecap="round" stroke-linejoin="round"/></svg>
<svg style="position:absolute;left:1571.5px;top:338px;" width="16" height="16" viewBox="0 0 16 16" fill="none"><path d="M3.5 4.5 L7 8 L3.5 11.5 M8.5 4.5 L12 8 L8.5 11.5" stroke="#ccccdc" stroke-width="1.6" stroke-linecap="round" stroke-linejoin="round"/></svg>
<div style="position:absolute;left:1600.5px;top:354px;width:1px;height:8px;background:#999;"></div>
<div style="position:absolute;left:1603.5px;top:354px;width:1px;height:8px;background:#999;"></div>
<div style="position:absolute;left:1610px;top:327px;width:1px;height:38px;background:rgba(204,204,220,0.12);"></div>
<div style="position:absolute;top:339.39px;font-size:14.9px;line-height:14.9px;font-weight:400;color:#ccccdc;white-space:nowrap;left:1613.0px;">0μs</div>
<div style="position:absolute;top:339.39px;font-size:14.9px;line-height:14.9px;font-weight:400;color:#ccccdc;white-space:nowrap;left:1842.875px;">1.93ms</div>
<div style="position:absolute;left:1840px;top:327px;width:1px;height:38px;background:rgba(204,204,220,0.12);"></div>
<div style="position:absolute;left:1840px;top:365px;width:1px;height:542px;background:rgba(204,204,220,0.12);"></div>
<div style="position:absolute;top:339.39px;font-size:14.9px;line-height:14.9px;font-weight:400;color:#ccccdc;white-space:nowrap;left:2073.25px;">3.86ms</div>
<div style="position:absolute;left:2071px;top:327px;width:1px;height:38px;background:rgba(204,204,220,0.12);"></div>
<div style="position:absolute;left:2071px;top:365px;width:1px;height:542px;background:rgba(204,204,220,0.12);"></div>
<div style="position:absolute;top:339.39px;font-size:14.9px;line-height:14.9px;font-weight:400;color:#ccccdc;white-space:nowrap;left:2303.625px;">5.78ms</div>
<div style="position:absolute;left:2301px;top:327px;width:1px;height:38px;background:rgba(204,204,220,0.12);"></div>
<div style="position:absolute;left:2301px;top:365px;width:1px;height:542px;background:rgba(204,204,220,0.12);"></div>
<div style="position:absolute;top:339.64px;font-size:14.6px;line-height:14.6px;font-weight:400;color:#ccccdc;white-space:nowrap;right:29px;text-align:right;">7.71ms</div>
<div style="position:absolute;left:1610px;top:365px;width:1px;height:542px;background:rgba(204,204,220,0.12);"></div>
<div style="position:absolute;left:1305px;top:365px;width:1px;height:542px;background:rgba(204,204,220,0.12);"></div>
<div style="position:absolute;left:1328px;top:392px;width:1px;height:515px;background:rgba(204,204,220,0.12);"></div>
<div style="position:absolute;left:1302px;top:906px;width:1230px;height:1.5px;background:rgba(204,204,220,0.25);"></div>
<svg style="position:absolute;left:1306px;top:372.5px;" width="16" height="16" viewBox="0 0 16 16" fill="none"><path d="M4.6 6.3 L8 9.7 L11.4 6.3" stroke="#ccccdc" stroke-width="1.4" stroke-linecap="round" stroke-linejoin="round"/></svg>
<div style="position:absolute;left:1325px;top:370.5px;width:4px;height:18px;background:#ecc06a;"></div>
<div style="position:absolute;top:371.12px;font-size:16.4px;line-height:16.4px;font-weight:400;color:#ededf2;white-space:nowrap;-webkit-text-stroke:0.3px #ededf2;left:1335.9px;">ingestion-trigger</div>
<div style="position:absolute;top:374.13px;font-size:13.2px;line-height:13.2px;font-weight:400;color:rgba(204,204,220,0.65);white-space:nowrap;-webkit-text-stroke:0.25px rgba(204,204,220,0.65);left:1463px;">GET /explorer/directory</div>
<div style="position:absolute;left:1610px;top:374.6px;width:921.5px;height:10px;background:#ecc06a;border-radius:3px;"></div>
<div style="position:absolute;left:1348px;top:397.3px;width:4px;height:18.6px;background:#ecc06a;"></div>
<div style="position:absolute;top:398.22px;font-size:16.4px;line-height:16.4px;font-weight:400;color:#ededf2;white-space:nowrap;-webkit-text-stroke:0.3px #ededf2;left:1359.3px;">ingestion-trigger</div>
<div style="position:absolute;left:1486px;top:401.23px;width:116px;overflow:hidden;font-size:13.2px;line-height:13.2px;white-space:nowrap;color:rgba(204,204,220,0.65);-webkit-text-stroke:0.25px rgba(204,204,220,0.65);">middleware - query</div>
<div style="position:absolute;left:1610px;top:401.6px;width:11px;height:10px;background:#ecc06a;border-radius:3px;"></div>
<div style="position:absolute;top:401.73px;font-size:12.6px;line-height:12.6px;font-weight:400;color:rgba(204,204,220,0.75);white-space:nowrap;-webkit-text-stroke:0.15px rgba(204,204,220,0.75);left:1626.2px;">95μs</div>
<div style="position:absolute;left:1348px;top:424.3px;width:4px;height:18.6px;background:#ecc06a;"></div>
<div style="position:absolute;top:425.22px;font-size:16.4px;line-height:16.4px;font-weight:400;color:#ededf2;white-space:nowrap;-webkit-text-stroke:0.3px #ededf2;left:1359.3px;">ingestion-trigger</div>
<div style="position:absolute;left:1486px;top:428.23px;width:116px;overflow:hidden;font-size:13.2px;line-height:13.2px;white-space:nowrap;color:rgba(204,204,220,0.65);-webkit-text-stroke:0.25px rgba(204,204,220,0.65);">middleware - middle</div>
<div style="position:absolute;left:1610px;top:428.6px;width:14px;height:10px;background:#ecc06a;border-radius:3px;"></div>
<div style="position:absolute;top:428.73px;font-size:12.6px;line-height:12.6px;font-weight:400;color:rgba(204,204,220,0.75);white-space:nowrap;-webkit-text-stroke:0.15px rgba(204,204,220,0.75);left:1631px;">124.4μs</div>
<div style="position:absolute;left:1348px;top:451.3px;width:4px;height:18.6px;background:#ecc06a;"></div>
<div style="position:absolute;top:452.22px;font-size:16.4px;line-height:16.4px;font-weight:400;color:#ededf2;white-space:nowrap;-webkit-text-stroke:0.3px #ededf2;left:1359.3px;">ingestion-trigger</div>
<div style="position:absolute;left:1486px;top:455.23px;width:116px;overflow:hidden;font-size:13.2px;line-height:13.2px;white-space:nowrap;color:rgba(204,204,220,0.65);-webkit-text-stroke:0.25px rgba(204,204,220,0.65);">middleware - expres</div>
<div style="position:absolute;left:1610px;top:455.6px;width:6px;height:10px;background:#ecc06a;border-radius:3px;"></div>
<div style="position:absolute;top:455.73px;font-size:12.6px;line-height:12.6px;font-weight:400;color:rgba(204,204,220,0.75);white-space:nowrap;-webkit-text-stroke:0.15px rgba(204,204,220,0.75);left:1620px;">46μs</div>
<div style="position:absolute;left:1348px;top:478.3px;width:4px;height:18.6px;background:#ecc06a;"></div>
<div style="position:absolute;top:479.22px;font-size:16.4px;line-height:16.4px;font-weight:400;color:#ededf2;white-space:nowrap;-webkit-text-stroke:0.3px #ededf2;left:1359.3px;">ingestion-trigger</div>
<div style="position:absolute;left:1486px;top:482.23px;width:116px;overflow:hidden;font-size:13.2px;line-height:13.2px;white-space:nowrap;color:rgba(204,204,220,0.65);-webkit-text-stroke:0.25px rgba(204,204,220,0.65);">middleware - reques</div>
<div style="position:absolute;left:1729px;top:482.6px;width:2px;height:10px;background:#ecc06a;border-radius:2px;"></div>
<div style="position:absolute;top:482.73px;font-size:12.6px;line-height:12.6px;font-weight:400;color:rgba(204,204,220,0.75);white-space:nowrap;-webkit-text-stroke:0.15px rgba(204,204,220,0.75);left:1738px;">14.9μs</div>
<div style="position:absolute;left:1348px;top:505.3px;width:4px;height:18.6px;background:#ecc06a;"></div>
<div style="position:absolute;top:506.22px;font-size:16.4px;line-height:16.4px;font-weight:400;color:#ededf2;white-space:nowrap;-webkit-text-stroke:0.3px #ededf2;left:1359.3px;">ingestion-trigger</div>
<div style="position:absolute;left:1486px;top:509.23px;width:116px;overflow:hidden;font-size:13.2px;line-height:13.2px;white-space:nowrap;color:rgba(204,204,220,0.65);-webkit-text-stroke:0.25px rgba(204,204,220,0.65);">middleware - compr</div>
<div style="position:absolute;left:1729px;top:509.6px;width:6px;height:10px;background:#ecc06a;border-radius:3px;"></div>
<div style="position:absolute;top:509.73px;font-size:12.6px;line-height:12.6px;font-weight:400;color:rgba(204,204,220,0.75);white-space:nowrap;-webkit-text-stroke:0.15px rgba(204,204,220,0.75);left:1740.8px;">48.5μs</div>
<div style="position:absolute;left:1348px;top:532.3000000000001px;width:4px;height:18.6px;background:#ecc06a;"></div>
<div style="position:absolute;top:533.22px;font-size:16.4px;line-height:16.4px;font-weight:400;color:#ededf2;white-space:nowrap;-webkit-text-stroke:0.3px #ededf2;left:1359.3px;">ingestion-trigger</div>
<div style="position:absolute;left:1486px;top:536.23px;width:116px;overflow:hidden;font-size:13.2px;line-height:13.2px;white-space:nowrap;color:rgba(204,204,220,0.65);-webkit-text-stroke:0.25px rgba(204,204,220,0.65);">middleware - pathPa</div>
<div style="position:absolute;left:1729px;top:536.6px;width:11px;height:10px;background:#ecc06a;border-radius:3px;"></div>
<div style="position:absolute;top:536.73px;font-size:12.6px;line-height:12.6px;font-weight:400;color:rgba(204,204,220,0.75);white-space:nowrap;-webkit-text-stroke:0.15px rgba(204,204,220,0.75);left:1746px;">90.8μs</div>
<div style="position:absolute;left:1348px;top:559.3000000000001px;width:4px;height:18.6px;background:#ecc06a;"></div>
<div style="position:absolute;top:560.22px;font-size:16.4px;line-height:16.4px;font-weight:400;color:#ededf2;white-space:nowrap;-webkit-text-stroke:0.3px #ededf2;left:1359.3px;">ingestion-trigger</div>
<div style="position:absolute;left:1486px;top:563.23px;width:116px;overflow:hidden;font-size:13.2px;line-height:13.2px;white-space:nowrap;color:rgba(204,204,220,0.65);-webkit-text-stroke:0.25px rgba(204,204,220,0.65);">middleware - multip</div>
<div style="position:absolute;left:1729px;top:563.6px;width:2px;height:10px;background:#ecc06a;border-radius:2px;"></div>
<div style="position:absolute;top:563.73px;font-size:12.6px;line-height:12.6px;font-weight:400;color:rgba(204,204,220,0.75);white-space:nowrap;-webkit-text-stroke:0.15px rgba(204,204,220,0.75);left:1738px;">17.5μs</div>
<div style="position:absolute;left:1348px;top:586.3000000000001px;width:4px;height:18.6px;background:#ecc06a;"></div>
<div style="position:absolute;top:587.22px;font-size:16.4px;line-height:16.4px;font-weight:400;color:#ededf2;white-space:nowrap;-webkit-text-stroke:0.3px #ededf2;left:1359.3px;">ingestion-trigger</div>
<div style="position:absolute;left:1486px;top:590.23px;width:116px;overflow:hidden;font-size:13.2px;line-height:13.2px;white-space:nowrap;color:rgba(204,204,220,0.65);-webkit-text-stroke:0.25px rgba(204,204,220,0.65);">middleware - metad</div>
<div style="position:absolute;left:1729px;top:590.6px;width:4px;height:10px;background:#ecc06a;border-radius:2px;"></div>
<div style="position:absolute;top:590.73px;font-size:12.6px;line-height:12.6px;font-weight:400;color:rgba(204,204,220,0.75);white-space:nowrap;-webkit-text-stroke:0.15px rgba(204,204,220,0.75);left:1739px;">33.5μs</div>
<div style="position:absolute;left:1348px;top:613.3000000000001px;width:4px;height:18.6px;background:#ecc06a;"></div>
<div style="position:absolute;top:614.22px;font-size:16.4px;line-height:16.4px;font-weight:400;color:#ededf2;white-space:nowrap;-webkit-text-stroke:0.3px #ededf2;left:1359.3px;">ingestion-trigger</div>
<div style="position:absolute;left:1486px;top:617.23px;width:116px;overflow:hidden;font-size:13.2px;line-height:13.2px;white-space:nowrap;color:rgba(204,204,220,0.65);-webkit-text-stroke:0.25px rgba(204,204,220,0.65);">middleware - jsonPa</div>
<div style="position:absolute;left:1729px;top:617.6px;width:3px;height:10px;background:#ecc06a;border-radius:2px;"></div>
<div style="position:absolute;top:617.73px;font-size:12.6px;line-height:12.6px;font-weight:400;color:rgba(204,204,220,0.75);white-space:nowrap;-webkit-text-stroke:0.15px rgba(204,204,220,0.75);left:1738px;">24.5μs</div>
<div style="position:absolute;left:1348px;top:640.3000000000001px;width:4px;height:18.6px;background:#ecc06a;"></div>
<div style="position:absolute;top:641.22px;font-size:16.4px;line-height:16.4px;font-weight:400;color:#ededf2;white-space:nowrap;-webkit-text-stroke:0.3px #ededf2;left:1359.3px;">ingestion-trigger</div>
<div style="position:absolute;left:1486px;top:644.23px;width:116px;overflow:hidden;font-size:13.2px;line-height:13.2px;white-space:nowrap;color:rgba(204,204,220,0.65);-webkit-text-stroke:0.25px rgba(204,204,220,0.65);">middleware - result</div>
<div style="position:absolute;left:1729px;top:644.6px;width:24px;height:10px;background:#ecc06a;border-radius:3px;"></div>
<div style="position:absolute;top:644.73px;font-size:12.6px;line-height:12.6px;font-weight:400;color:rgba(204,204,220,0.75);white-space:nowrap;-webkit-text-stroke:0.15px rgba(204,204,220,0.75);left:1760px;">197.7μs</div>
<div style="position:absolute;left:1348px;top:667.3000000000001px;width:4px;height:18.6px;background:#ecc06a;"></div>
<div style="position:absolute;top:668.22px;font-size:16.4px;line-height:16.4px;font-weight:400;color:#ededf2;white-space:nowrap;-webkit-text-stroke:0.3px #ededf2;left:1359.3px;">ingestion-trigger</div>
<div style="position:absolute;left:1486px;top:671.23px;width:116px;overflow:hidden;font-size:13.2px;line-height:13.2px;white-space:nowrap;color:rgba(204,204,220,0.65);-webkit-text-stroke:0.25px rgba(204,204,220,0.65);">request handler - /d</div>
<div style="position:absolute;left:1729px;top:671.6px;width:2px;height:10px;background:#ecc06a;border-radius:2px;"></div>
<div style="position:absolute;top:671.73px;font-size:12.6px;line-height:12.6px;font-weight:400;color:rgba(204,204,220,0.75);white-space:nowrap;-webkit-text-stroke:0.15px rgba(204,204,220,0.75);left:1737.3px;">2μs</div>
<div style="position:absolute;left:1348px;top:694.3000000000001px;width:4px;height:18.6px;background:#ecc06a;"></div>
<div style="position:absolute;top:695.22px;font-size:16.4px;line-height:16.4px;font-weight:400;color:#ededf2;white-space:nowrap;-webkit-text-stroke:0.3px #ededf2;left:1359.3px;">ingestion-trigger</div>
<div style="position:absolute;left:1486px;top:698.23px;width:116px;overflow:hidden;font-size:13.2px;line-height:13.2px;white-space:nowrap;color:rgba(204,204,220,0.65);-webkit-text-stroke:0.25px rgba(204,204,220,0.65);">middleware - traceC</div>
<div style="position:absolute;left:1729px;top:698.6px;width:3px;height:10px;background:#ecc06a;border-radius:2px;"></div>
<div style="position:absolute;top:698.73px;font-size:12.6px;line-height:12.6px;font-weight:400;color:rgba(204,204,220,0.75);white-space:nowrap;-webkit-text-stroke:0.15px rgba(204,204,220,0.75);left:1738px;">26.5μs</div>
<div style="position:absolute;left:1348px;top:721.3000000000001px;width:4px;height:18.6px;background:#ecc06a;"></div>
<div style="position:absolute;top:722.22px;font-size:16.4px;line-height:16.4px;font-weight:400;color:#ededf2;white-space:nowrap;-webkit-text-stroke:0.3px #ededf2;left:1359.3px;">ingestion-trigger</div>
<div style="position:absolute;left:1486px;top:725.23px;width:116px;overflow:hidden;font-size:13.2px;line-height:13.2px;white-space:nowrap;color:rgba(204,204,220,0.65);-webkit-text-stroke:0.25px rgba(204,204,220,0.65);">router - / (1.7μs)</div>
<div style="position:absolute;left:1729px;top:725.6px;width:2px;height:10px;background:#ecc06a;border-radius:2px;"></div>
<div style="position:absolute;top:725.73px;font-size:12.6px;line-height:12.6px;font-weight:400;color:rgba(204,204,220,0.75);white-space:nowrap;-webkit-text-stroke:0.15px rgba(204,204,220,0.75);left:1738px;">1.7μs</div>
<div style="position:absolute;left:1348px;top:748.3000000000001px;width:4px;height:18.6px;background:#ecc06a;"></div>
<div style="position:absolute;top:749.22px;font-size:16.4px;line-height:16.4px;font-weight:400;color:#ededf2;white-space:nowrap;-webkit-text-stroke:0.3px #ededf2;left:1359.3px;">ingestion-trigger</div>
<div style="position:absolute;left:1486px;top:752.23px;width:116px;overflow:hidden;font-size:13.2px;line-height:13.2px;white-space:nowrap;color:rgba(204,204,220,0.65);-webkit-text-stroke:0.25px rgba(204,204,220,0.65);">middleware - securi</div>
<div style="position:absolute;left:1729px;top:752.6px;width:2px;height:10px;background:#ecc06a;border-radius:2px;"></div>
<div style="position:absolute;top:752.73px;font-size:12.6px;line-height:12.6px;font-weight:400;color:rgba(204,204,220,0.75);white-space:nowrap;-webkit-text-stroke:0.15px rgba(204,204,220,0.75);left:1738px;">18.9μs</div>
<div style="position:absolute;left:1348px;top:775.3000000000001px;width:4px;height:18.6px;background:#ecc06a;"></div>
<div style="position:absolute;top:776.22px;font-size:16.4px;line-height:16.4px;font-weight:400;color:#ededf2;white-space:nowrap;-webkit-text-stroke:0.3px #ededf2;left:1359.3px;">ingestion-trigger</div>
<div style="position:absolute;left:1486px;top:779.23px;width:116px;overflow:hidden;font-size:13.2px;line-height:13.2px;white-space:nowrap;color:rgba(204,204,220,0.65);-webkit-text-stroke:0.25px rgba(204,204,220,0.65);">router - /explorer (2</div>
<div style="position:absolute;left:1729px;top:779.6px;width:2px;height:10px;background:#ecc06a;border-radius:2px;"></div>
<div style="position:absolute;top:779.73px;font-size:12.6px;line-height:12.6px;font-weight:400;color:rgba(204,204,220,0.75);white-space:nowrap;-webkit-text-stroke:0.15px rgba(204,204,220,0.75);left:1737px;">2.1μs</div>
<div style="position:absolute;left:1348px;top:802.3000000000001px;width:4px;height:18.6px;background:#ecc06a;"></div>
<div style="position:absolute;top:803.22px;font-size:16.4px;line-height:16.4px;font-weight:400;color:#ededf2;white-space:nowrap;-webkit-text-stroke:0.3px #ededf2;left:1359.3px;">ingestion-trigger</div>
<div style="position:absolute;left:1486px;top:806.23px;width:116px;overflow:hidden;font-size:13.2px;line-height:13.2px;white-space:nowrap;color:rgba(204,204,220,0.65);-webkit-text-stroke:0.25px rgba(204,204,220,0.65);">fs stat (123.7μs)</div>
<div style="position:absolute;left:1848px;top:806.6px;width:15px;height:10px;background:#ecc06a;border-radius:3px;"></div>
<div style="position:absolute;top:806.73px;font-size:12.6px;line-height:12.6px;font-weight:400;color:rgba(204,204,220,0.75);white-space:nowrap;-webkit-text-stroke:0.15px rgba(204,204,220,0.75);left:1870px;">123.7μs</div>
<div style="position:absolute;left:1348px;top:829.3000000000001px;width:4px;height:18.6px;background:#ecc06a;"></div>
<div style="position:absolute;top:830.22px;font-size:16.4px;line-height:16.4px;font-weight:400;color:#ededf2;white-space:nowrap;-webkit-text-stroke:0.3px #ededf2;left:1359.3px;">ingestion-trigger</div>
<div style="position:absolute;left:1486px;top:833.23px;width:116px;overflow:hidden;font-size:13.2px;line-height:13.2px;white-space:nowrap;color:rgba(204,204,220,0.65);-webkit-text-stroke:0.25px rgba(204,204,220,0.65);">fs opendir (2.11ms)</div>
<div style="position:absolute;left:1848px;top:833.6px;width:252px;height:10px;background:#ecc06a;border-radius:3px;"></div>
<div style="position:absolute;top:833.73px;font-size:12.6px;line-height:12.6px;font-weight:400;color:rgba(204,204,220,0.75);white-space:nowrap;-webkit-text-stroke:0.15px rgba(204,204,220,0.75);left:2106.2px;">2.11ms</div>
<div style="position:absolute;left:1348px;top:856.3000000000001px;width:4px;height:18.6px;background:#ecc06a;"></div>
<div style="position:absolute;top:857.22px;font-size:16.4px;line-height:16.4px;font-weight:400;color:#ededf2;white-space:nowrap;-webkit-text-stroke:0.3px #ededf2;left:1359.3px;">ingestion-trigger</div>
<div style="position:absolute;left:1486px;top:860.23px;width:116px;overflow:hidden;font-size:13.2px;line-height:13.2px;white-space:nowrap;color:rgba(204,204,220,0.65);-webkit-text-stroke:0.25px rgba(204,204,220,0.65);">fs access (205.1μs)</div>
<div style="position:absolute;left:1848px;top:860.6px;width:25px;height:10px;background:#ecc06a;border-radius:3px;"></div>
<div style="position:absolute;top:860.73px;font-size:12.6px;line-height:12.6px;font-weight:400;color:rgba(204,204,220,0.75);white-space:nowrap;-webkit-text-stroke:0.15px rgba(204,204,220,0.75);left:1879.3px;">205.1μs</div>
<div style="position:absolute;left:1348px;top:883.3000000000001px;width:4px;height:18.6px;background:#ecc06a;"></div>
<div style="position:absolute;top:884.22px;font-size:16.4px;line-height:16.4px;font-weight:400;color:#ededf2;white-space:nowrap;-webkit-text-stroke:0.3px #ededf2;left:1359.3px;">ingestion-trigger</div>
<div style="position:absolute;left:1486px;top:887.23px;width:116px;overflow:hidden;font-size:13.2px;line-height:13.2px;white-space:nowrap;color:rgba(204,204,220,0.65);-webkit-text-stroke:0.25px rgba(204,204,220,0.65);">fs stat (1.76ms)</div>
<div style="position:absolute;left:2207px;top:887.6px;width:211px;height:10px;background:#ecc06a;border-radius:3px;"></div>
<div style="position:absolute;top:887.73px;font-size:12.6px;line-height:12.6px;font-weight:400;color:rgba(204,204,220,0.75);white-space:nowrap;-webkit-text-stroke:0.15px rgba(204,204,220,0.75);right:356px;text-align:right;">1.76ms</div>
<div style="position:absolute;left:2487px;top:870px;width:40px;height:40px;background:#181b1f;border:1px solid rgba(204,204,220,0.12);border-radius:2px;box-sizing:border-box;"></div>
<svg style="position:absolute;left:2499px;top:882px;" width="16" height="16" viewBox="0 0 16 16" fill="none"><path d="M8 12.5 V4 M4.8 7 L8 3.8 L11.2 7" stroke="rgba(204,204,220,0.65)" stroke-width="1.5" stroke-linecap="round" stroke-linejoin="round"/></svg>
</div></body></html>
